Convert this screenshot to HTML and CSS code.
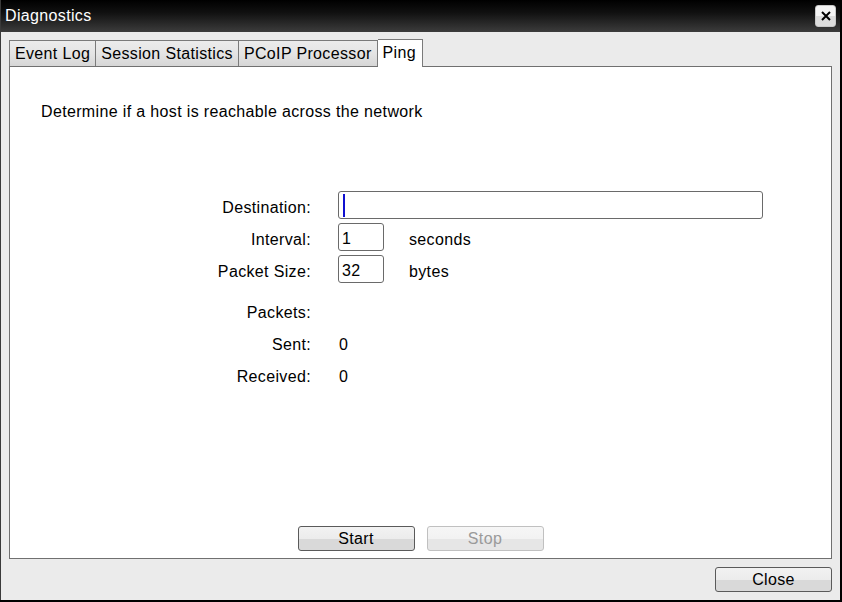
FILE: index.html
```html
<!DOCTYPE html>
<html>
<head>
<meta charset="utf-8">
<link rel="stylesheet" href="styles.css">
</head>
<body>
<div class="window">
  <div class="titlebar">
    <span class="title">Diagnostics</span>
    <button class="close-x" aria-label="close">
      <svg width="12" height="12" viewBox="0 0 12 12"><path d="M2 2 L10 10 M10 2 L2 10" stroke="#000" stroke-width="2"/></svg>
    </button>
  </div>
  <div class="content">
    <div class="tabs">
      <div class="tab">Event Log</div>
      <div class="tab">Session Statistics</div>
      <div class="tab">PCoIP Processor</div>
      <div class="tab active">Ping</div>
    </div>
    <div class="panel">
      <p class="desc">Determine if a host is reachable across the network</p>
      <div class="form">
        <div class="row input-row">
          <label class="lbl">Destination:</label>
          <div class="field wide"><span class="caret"></span></div>
        </div>
        <div class="row input-row">
          <label class="lbl">Interval:</label>
          <div class="field small">1</div>
          <span class="unit">seconds</span>
        </div>
        <div class="row input-row">
          <label class="lbl">Packet Size:</label>
          <div class="field small">32</div>
          <span class="unit">bytes</span>
        </div>
        <div class="row text-row first">
          <label class="lbl">Packets:</label>
        </div>
        <div class="row text-row">
          <label class="lbl">Sent:</label>
          <span class="val">0</span>
        </div>
        <div class="row text-row">
          <label class="lbl">Received:</label>
          <span class="val">0</span>
        </div>
      </div>
      <div class="actions">
        <button class="btn">Start</button>
        <button class="btn disabled">Stop</button>
      </div>
    </div>
    <div class="footer">
      <button class="btn">Close</button>
    </div>
  </div>
</div>
</body>
</html>
```
FILE: styles.css
```css
html, body {
  margin: 0;
  padding: 0;
  background: #000;
}
body {
  width: 842px;
  height: 602px;
  font-family: "Liberation Sans", Arial, sans-serif;
  font-size: 16px;
  letter-spacing: 0.35px;
  color: #000;
}
.window {
  width: 840px;
  height: 600px;
  box-sizing: border-box;
  border-left: 1px solid #3a3a3a;
  background: #ebebeb;
  display: flex;
  flex-direction: column;
}
.titlebar {
  height: 32px;
  flex: none;
  background: linear-gradient(#000 0%, #111 40%, #3c3c3c 100%);
  display: flex;
  align-items: center;
  justify-content: space-between;
  padding: 0 4px 0 4px;
}
.title {
  color: #fff;
  font-size: 16px;
  margin-top: 0;
}
.close-x {
  width: 21px;
  height: 22px;
  padding: 0;
  margin-top: -1px;
  border: 1px solid #c8c8c8;
  border-radius: 3px;
  background: linear-gradient(#f4f4f4 0%, #f4f4f4 50%, #dcdcdc 50%, #dcdcdc 100%);
  display: flex;
  align-items: center;
  justify-content: center;
}
.content {
  flex: 1;
  padding: 7px 0 0 8px;
  display: flex;
  flex-direction: column;
}
.tabs {
  display: flex;
  height: 27px;
  align-items: flex-end;
}
.tab {
  height: 26px;
  box-sizing: border-box;
  border: 1px solid #7a7a7a;
  border-bottom: none;
  border-left: none;
  padding: 0 5px 0 5px;
  line-height: 26px;
  background: linear-gradient(#ececec 0%, #e4e4e4 50%, #d6d6d6 100%);
}
.tab:first-child {
  border-left: 1px solid #7a7a7a;
}
.tab.active {
  background: #fff;
  height: 28px;
  margin-bottom: -1px;
  position: relative;
  z-index: 1;
  line-height: 25px;
  padding: 0 6px 0 5px;
}
.panel {
  width: 823px;
  height: 493px;
  box-sizing: border-box;
  border: 1px solid #707070;
  background: #fff;
  display: flex;
  flex-direction: column;
}
.desc {
  margin: 36px 0 0 31px;
  line-height: 18px;
}
.form {
  margin-top: 70px;
  display: flex;
  flex-direction: column;
}
.row {
  display: flex;
  align-items: center;
}
.lbl {
  width: 301px;
  text-align: right;
  flex: none;
}
.input-row {
  height: 28px;
  margin-bottom: 4px;
}
.input-row .lbl,
.input-row .unit {
  padding-top: 5px;
}
.field {
  margin-left: 27px;
  height: 28px;
  box-sizing: border-box;
  border: 1px solid #6a6a6a;
  border-radius: 3px;
  display: flex;
  align-items: center;
  padding: 3px 0 0 3px;
}
.field.wide {
  width: 425px;
  padding-top: 0;
}
.field.small {
  width: 46px;
}
.caret {
  width: 2px;
  height: 23px;
  background: #1010d0;
  margin-left: 1px;
}
.unit {
  margin-left: 25px;
}
.text-row {
  height: 32px;
}
.text-row .lbl,
.text-row .val {
  padding-top: 3px;
}
.text-row.first {
  margin-top: 8px;
}
.val {
  margin-left: 28px;
}
.actions {
  margin-top: auto;
  margin-bottom: 7px;
  display: flex;
  justify-content: center;
  gap: 12px;
}
.btn {
  width: 117px;
  height: 25px;
  box-sizing: border-box;
  border: 1px solid #5a5a5a;
  border-radius: 3px;
  background: linear-gradient(#f2f2f2 0%, #ececec 50%, #d9d9d9 50%, #d9d9d9 100%);
  font-family: "Liberation Sans", Arial, sans-serif;
  font-size: 16px;
  letter-spacing: 0.35px;
  color: #000;
  padding: 1px 0 0 0;
}
.btn.disabled {
  border-color: #c0c0c0;
  color: #9a9a9a;
  background: linear-gradient(#f6f6f6 0%, #f2f2f2 50%, #e6e6e6 50%, #e6e6e6 100%);
}
.footer {
  display: flex;
  justify-content: flex-end;
  width: 823px;
  margin-top: 8px;
}
```
